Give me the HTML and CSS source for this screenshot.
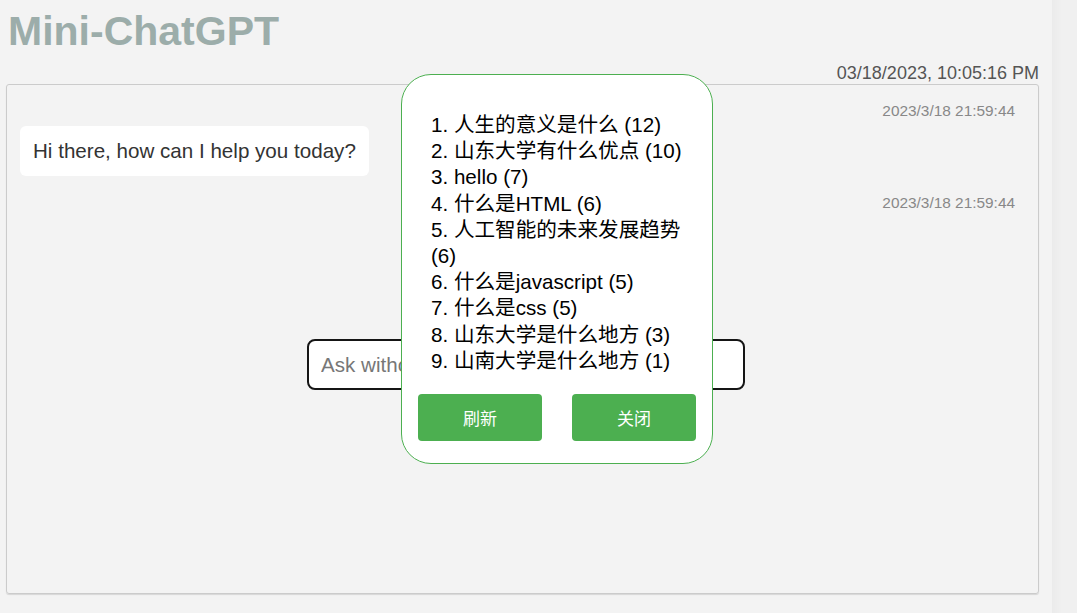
FILE: index.html
```html
<!DOCTYPE html>
<html lang="zh">
<head>
<meta charset="utf-8">
<title>Mini-ChatGPT</title>
<link rel="stylesheet" href="styles.css">
</head>
<body>
<div class="layout">
  <main class="main">
    <h1 class="title">Mini-ChatGPT</h1>
    <div class="now">03/18/2023, 10:05:16 PM</div>
    <section class="chat">
      <div class="ts">2023/3/18 21:59:44</div>
      <div class="bubble">Hi there, how can I help you today?</div>
      <div class="ts ts-2">2023/3/18 21:59:44</div>
      <div class="ask">
        <input class="ask-input" type="text" placeholder="Ask without context...">
      </div>
    </section>
  </main>
  <aside class="strip"></aside>
</div>

<div class="modal">
  <ol class="hot">
    <li>1. 人生的意义是什么 (12)</li>
    <li>2. 山东大学有什么优点 (10)</li>
    <li>3. hello (7)</li>
    <li>4. 什么是HTML (6)</li>
    <li>5. 人工智能的未来发展趋势 (6)</li>
    <li>6. 什么是javascript (5)</li>
    <li>7. 什么是css (5)</li>
    <li>8. 山东大学是什么地方 (3)</li>
    <li>9. 山南大学是什么地方 (1)</li>
  </ol>
  <div class="actions">
    <button class="btn">刷新</button>
    <button class="btn">关闭</button>
  </div>
</div>
</body>
</html>
```

FILE: styles.css
```css
* { box-sizing: border-box; }

html, body {
  margin: 0;
  height: 100%;
}

body {
  background: #f3f3f3;
  font-family: "Liberation Sans", Arial, "Noto Sans CJK SC", sans-serif;
  color: #222;
  overflow: hidden;
}

.layout {
  display: flex;
  height: 100%;
}

.main {
  flex: 1;
  padding: 0 13px 0 6px;
  display: flex;
  flex-direction: column;
}

.strip {
  width: 25px;
  background: linear-gradient(to right, #ebebeb, #f0f0f0 40%, #f0f0f0);
}

.title {
  margin: 7px 0 0 2px;
  font-size: 41px;
  line-height: 48px;
  font-weight: bold;
  color: #9cadaa;
}

.now {
  margin-top: 8px;
  text-align: right;
  font-size: 18px;
  line-height: 20px;
  color: #555;
}

.chat {
  margin-top: 1px;
  height: 510px;
  border: 1px solid #cbcbcb;
  border-radius: 3px;
  box-shadow: 0 1px 1px rgba(0, 0, 0, 0.12);
  padding: 16px 23px 0 13px;
  display: flex;
  flex-direction: column;
  align-items: flex-start;
}

.ts {
  align-self: stretch;
  text-align: right;
  font-size: 15.4px;
  line-height: 20px;
  color: #888;
}

.ts-2 {
  margin-top: 17px;
}

.bubble {
  margin-top: 5px;
  background: #fff;
  border-radius: 6px;
  padding: 12px 13px;
  font-size: 20.6px;
  line-height: 26px;
  color: #333;
}

.ask {
  margin: 126px 0 0 287px;
}

.ask-input {
  width: 438px;
  height: 51px;
  border: 2px solid #151515;
  border-radius: 8px;
  background: #fff;
  padding: 0 12px;
  font-family: inherit;
  font-size: 20.6px;
  color: #333;
  outline: none;
}

.ask-input::placeholder {
  color: #777;
}

.modal {
  position: fixed;
  left: 401px;
  top: 74px;
  width: 312px;
  height: 390px;
  background: #fff;
  border: 1px solid #4caf50;
  border-radius: 30px;
  padding: 37px 16px 22px 16px;
  display: flex;
  flex-direction: column;
}

.hot {
  list-style: none;
  margin: 0;
  padding: 0 4px 0 13px;
  font-size: 20.6px;
  line-height: 26.2px;
  color: #000;
}

.hot li {
  margin: 0;
}

.actions {
  margin-top: 20px;
  display: flex;
  justify-content: space-between;
}

.btn {
  width: 124px;
  height: 47px;
  border: 0;
  border-radius: 4px;
  background: #4caf50;
  color: #fff;
  font-family: "Noto Sans CJK SC", sans-serif;
  font-size: 17px;
  cursor: pointer;
}
```
